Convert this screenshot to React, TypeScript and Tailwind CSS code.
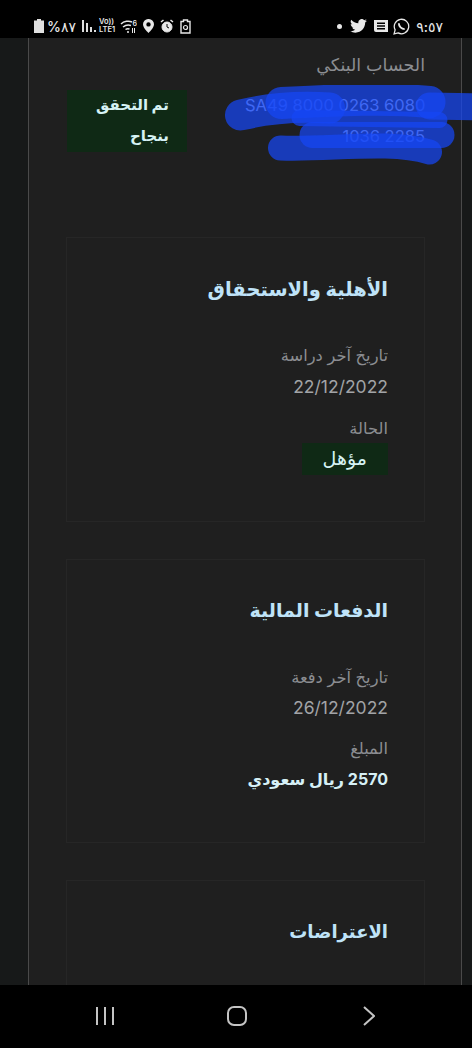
const font = { fontFamily: "Inter, 'DejaVu Sans', sans-serif" };

const StatusBar = () => (
  <div dir="ltr" className="flex h-[38px] shrink-0 items-center justify-between bg-black pl-[34px] pr-[29px] pt-[14px] text-[#e8e8e8]">
    <div className="flex items-center">
      <svg width="10" height="14" viewBox="0 0 10 14"><path d="M3 0h4v1.500h3V14H0V1.500h3z" fill="#e0e0e0" /></svg>
      <span className="ml-[3px] text-[14px] font-medium tracking-[-0.5px]">%٨٧</span>
      <svg className="ml-[6px]" width="14" height="12" viewBox="0 0 14 12" fill="#ddd">
        <rect x="0" y="0" width="2" height="12" />
        <rect x="4" y="3" width="2" height="9" />
        <rect x="8" y="7" width="2" height="5" />
        <rect x="12" y="10" width="2" height="2" />
      </svg>
      <div className="ml-[3px] w-[16px] text-[7.500px] font-semibold leading-[8px]">
        <div>Vo))</div>
        <div>LTE1</div>
      </div>
      <svg className="ml-[5px]" width="17" height="15" viewBox="0 0 17 15" fill="none" stroke="#e8e8e8" strokeWidth="1.500">
        <path d="M1 5C4 2 9 1.500 12 3M3 8c2.500-2 5-2.500 8-1.500M5.500 10.500c1.500-1 2.500-1 4-.5" />
        <circle cx="8" cy="13" r="1" fill="#e8e8e8" stroke="none" />
        <path d="M12.500 9v5M14.500 14V9" strokeWidth="1" />
        <text x="12.500" y="6.500" fontSize="7" fill="#e8e8e8" stroke="none" fontWeight="600">6</text>
      </svg>
      <svg className="ml-[6px]" width="11" height="14" viewBox="0 0 11 14"><path fillRule="evenodd" d="M5.500 0A5.300 5.300 0 0 1 11 5.300C11 9 5.500 14 5.500 14S0 9 0 5.300A5.300 5.300 0 0 1 5.500 0zm0 3.200a2.200 2.200 0 1 0 0 4.400 2.200 2.200 0 0 0 0-4.400z" fill="#e8e8e8" /></svg>
      <svg className="ml-[6px]" width="14" height="14" viewBox="0 0 14 14" fill="none" stroke="#e8e8e8">
        <circle cx="7" cy="8" r="5" fill="#e8e8e8" />
        <path d="M7 5v3l2 1" stroke="#000" />
        <path d="M1 3l2.500-2M13 3l-2.500-2" strokeWidth="1.600" />
      </svg>
      <svg className="ml-[6px]" width="11" height="15" viewBox="0 0 11 15" fill="none" stroke="#e8e8e8" strokeWidth="1.400">
        <path d="M3.500 1h4v1.500h2.500v11.500H1V2.500h2.500z" />
        <circle cx="5.500" cy="8.500" r="2" strokeWidth="1.200" />
      </svg>
    </div>
    <div className="flex items-center gap-[5px]">
      <span className="mr-[3px] h-[5px] w-[5px] rounded-full bg-[#e8e8e8]" />
      <svg width="17" height="14" viewBox="0 0 24 20"><path d="M24 2.400a10 10 0 0 1-2.800.8 5 5 0 0 0 2.200-2.700 10 10 0 0 1-3.100 1.200 4.900 4.900 0 0 0-8.400 4.500A14 14 0 0 1 1.700 1 4.900 4.900 0 0 0 3.200 7.600a4.900 4.900 0 0 1-2.200-.6 4.900 4.900 0 0 0 3.900 4.800 4.900 4.900 0 0 1-2.200.1 4.900 4.900 0 0 0 4.600 3.400A9.900 9.900 0 0 1 0 17.300 14 14 0 0 0 7.500 19.500c9.100 0 14.300-7.700 14-14.600A10 10 0 0 0 24 2.400z" fill="#e8e8e8" /></svg>
      <svg width="14" height="12" viewBox="0 0 14 12" fill="#e8e8e8" className="ml-[2px]">
        <path fillRule="evenodd" d="M0 0h14v12H2a2 2 0 0 1-2-2zM3 2.500v1.500h8V2.500zM3 5.300v1.400h8V5.300zM3 8v1.500h8V8z" />
      </svg>
      <svg width="17" height="17" viewBox="0 0 16 16" fill="none" stroke="#e8e8e8" strokeWidth="1.200">
        <path d="M1 15l1-3.800A6.800 6.800 0 1 1 4.800 14z" />
        <path d="M5.500 5c0 3 2.500 5.500 5.500 5.500" strokeWidth="1.800" />
      </svg>
      <span className="ml-[1px] text-[14px] font-medium tracking-[0.5px]">٩:٥٧</span>
    </div>
  </div>
);

const Label = ({ children }: { children: React.ReactNode }) => (
  <div className="text-[16.300px] leading-[31px] text-[#8b8d91]">{children}</div>
);

const Card = ({ title, titleClass, className, children }: { title: string; titleClass: string; className: string; children?: React.ReactNode }) => (
  <section className={`border border-[#262626] px-[36px] pt-[33px] ${className}`}>
    <h2 className={`mb-[33px] font-bold leading-[36px] text-[#bfe3f8] ${titleClass}`}>{title}</h2>
    {children}
  </section>
);

export default function App() {
  return (
    <div dir="rtl" className="flex h-[1048px] w-[472px] flex-col overflow-hidden bg-black" style={font}>
      <StatusBar />
      <main className="flex min-h-0 flex-1 overflow-hidden bg-[#171919]">
        <div className="w-[10px] shrink-0" />
        <div className="min-w-0 flex-1 border-x border-[#4a4a4a] bg-[#1f1f1f] pl-[37px] pr-[36px] pt-[13px]">
          <div className="relative mb-[85px]">
            <div className="text-[17.500px] leading-[28px] text-[#8b8d91]">الحساب البنكي</div>
            <div className="mt-[11px] flex items-start justify-between">
              <div dir="ltr" className="w-[180px] whitespace-nowrap text-right text-[16.500px] leading-[31px] text-[#a9bef4]">
                SA49 8000 0263 6080
                <br />
                1036 2285
              </div>
              <div className="ml-[1px] w-[120px] bg-[#0f2915] px-[18px] text-[15px] font-bold leading-[31px] text-[#d6f2f4]">
                <div className="-translate-y-[1px]">تم التحقق بنجاح</div>
              </div>
            </div>
            {/* blue scribble hiding the account number */}
            <svg className="absolute left-[153px] top-[34px] blur-[0.6px]" width="253" height="80" viewBox="220 85 252 80" fill="none" strokeLinecap="round" strokeLinejoin="round">
              <g stroke="#1646f5" strokeOpacity="0.72">
                <path d="M241 115C270 108 300 106 330 108" strokeWidth="31" />
                <path d="M282 103C340 100 390 98 430 102" strokeWidth="32" />
                <path d="M300 118L440 120" strokeWidth="16" />
                <path d="M430 106L480 107" strokeWidth="27" />
                <path d="M313 135L442 135" strokeWidth="26" />
                <path d="M281 148C330 150 390 140 430 152" strokeWidth="25" />
              </g>
            </svg>
          </div>
          <Card title="الأهلية والاستحقاق" titleClass="text-[19.500px]" className="mb-[37px] h-[285px]">
            <Label>تاريخ آخر دراسة</Label>
            <div className="mb-[11px] mt-[1px] text-[17.500px] leading-[30px] text-[#a2a4a7]">22/12/2022</div>
            <Label>الحالة</Label>
            <div className="-mt-[1px] inline-block bg-[#0f2915] px-[21px] text-[19px] leading-[32px] text-[#d6f2f4]">مؤهل</div>
          </Card>
          <Card title="الدفعات المالية" titleClass="text-[19px]" className="mb-[37px] h-[284px]">
            <Label>تاريخ آخر دفعة</Label>
            <div className="mb-[10px] text-[17.500px] leading-[30px] text-[#a2a4a7]">26/12/2022</div>
            <Label>المبلغ</Label>
            <div className="text-[16px] font-bold leading-[30px] text-[#d6f0f6]">2570 ريال سعودي</div>
          </Card>
          <Card title="الاعتراضات" titleClass="text-[18px]" className="h-[200px]" />
        </div>
        <div className="w-[28px] shrink-0" />
      </main>
      <div dir="ltr" className="flex h-[63px] shrink-0 items-center bg-black pb-[2px] pl-[95px]">
        <svg width="20" height="20" viewBox="0 0 20 20" stroke="#c4c4c4" strokeWidth="2"><path d="M2 1v18M10 1v18M18 1v18" /></svg>
        <svg className="ml-[112px]" width="20" height="20" viewBox="0 0 20 20" fill="none" stroke="#c4c4c4" strokeWidth="2"><rect x="1" y="1" width="18" height="18" rx="6" /></svg>
        <svg className="ml-[116px]" width="12" height="20" viewBox="0 0 12 20" fill="none" stroke="#c4c4c4" strokeWidth="2"><path d="M1 1l10 9-10 9" /></svg>
      </div>
    </div>
  );
}
